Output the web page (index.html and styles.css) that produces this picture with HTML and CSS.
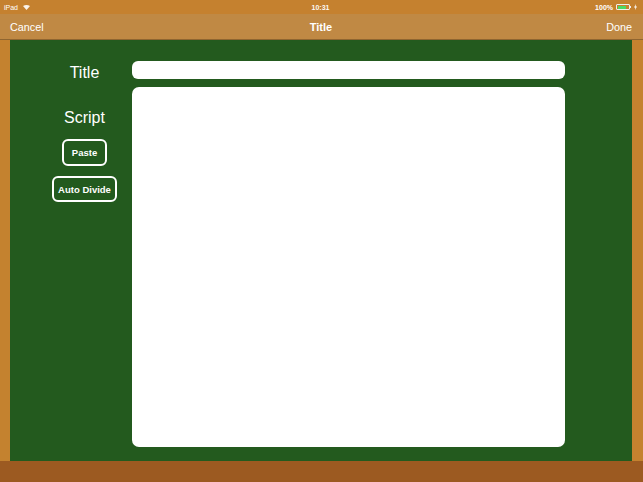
FILE: index.html
```html
<!DOCTYPE html>
<html>
<head>
<meta charset="utf-8">
<link rel="stylesheet" href="styles.css">
</head>
<body>
<div class="screen">
  <div class="status">
    <div class="st-left"><span>iPad</span>
      <svg class="wifi" width="7" height="5" viewBox="0 0 7 5"><path d="M0 1 Q3.5 -1 7 1 L3.5 5 Z" fill="#fff" opacity="0.9"/></svg>
    </div>
    <div class="st-center">10:31</div>
    <div class="st-right"><span>100%</span>
      <span class="battery"><span class="batt-fill"></span></span><span class="nub"></span>
      <svg class="bolt" width="3" height="6" viewBox="0 0 3 6"><path d="M2 0 L0 3.4 L1.4 3.4 L1 6 L3 2.6 L1.6 2.6 Z" fill="#fff"/></svg>
    </div>
  </div>
  <div class="nav">
    <span class="nav-btn">Cancel</span>
    <span class="nav-title">Title</span>
    <span class="nav-btn">Done</span>
  </div>
  <div class="main">
    <div class="side"></div>
    <div class="board">
      <div class="labels">
        <div class="label">Title</div>
        <div class="label script">Script</div>
        <div class="btn paste">Paste</div>
        <div class="btn divide">Auto Divide</div>
      </div>
      <div class="fields">
        <div class="title-field"></div>
        <div class="script-field"></div>
      </div>
    </div>
    <div class="side right"></div>
  </div>
  <div class="bottom"></div>
</div>
</body>
</html>
```
FILE: styles.css
```css
html, body { margin: 0; padding: 0; }
body { width: 643px; height: 482px; overflow: hidden; font-family: "Liberation Sans", Arial, sans-serif; }
.screen { width: 643px; height: 482px; display: flex; flex-direction: column; }
.status { height: 14px; background: #c5812f; color: #fff; display: flex; align-items: center; justify-content: space-between; font-size: 7px; }
.st-left { display: flex; align-items: center; gap: 5px; padding-left: 4px; width: 120px; }
.st-center { font-weight: bold; font-size: 7px; opacity: 0.95; }
.st-right { display: flex; align-items: center; justify-content: flex-end; width: 120px; padding-right: 6px; font-weight: bold; }
.st-right span:first-child { margin-right: 3px; }
.battery { border: 1px solid #eee; border-radius: 1px; display: flex; padding: 0.5px; box-sizing: content-box; width: 11px; height: 3px; }
.batt-fill { flex: 1; background: #4cd964; }
.nub { width: 1px; height: 2px; background: #eee; margin-right: 3px; }
.nav { height: 25px; background: #c08944; border-bottom: 1px solid #8f6530; display: flex; align-items: center; justify-content: space-between; padding: 0 11px 0 10px; color: #fff; font-size: 10.8px; }
.nav-title { font-weight: bold; font-size: 11px; }
.nav-btn { width: 40px; }
.nav-btn:last-child { text-align: right; }
.main { height: 421px; display: flex; }
.side { width: 10px; background: #c4822f; }
.side.right { width: 11px; }
.board { flex: 1; background: #235a1e; display: flex; padding: 21px 67px 14px 0; }
.labels { width: 89px; margin-left: 30px; margin-right: 3px; display: flex; flex-direction: column; align-items: center; color: #fff; padding-top: 3px; }
.label { font-size: 16px; line-height: 18px; }
.label.script { margin-top: 27px; }
.btn { box-sizing: border-box; border: 2px solid #fff; border-radius: 6px; height: 27px; display: flex; align-items: center; justify-content: center; font-weight: bold; font-size: 9.5px; }
.paste { width: 45px; margin-top: 12px; }
.divide { width: 65px; margin-top: 10px; height: 26px; }
.fields { flex: 1; display: flex; flex-direction: column; gap: 8px; }
.title-field { height: 18px; background: #fff; border-radius: 6px; }
.script-field { height: 360px; background: #fff; border-radius: 7px; }
.bottom { height: 21px; background: #9c5a21; }
```
